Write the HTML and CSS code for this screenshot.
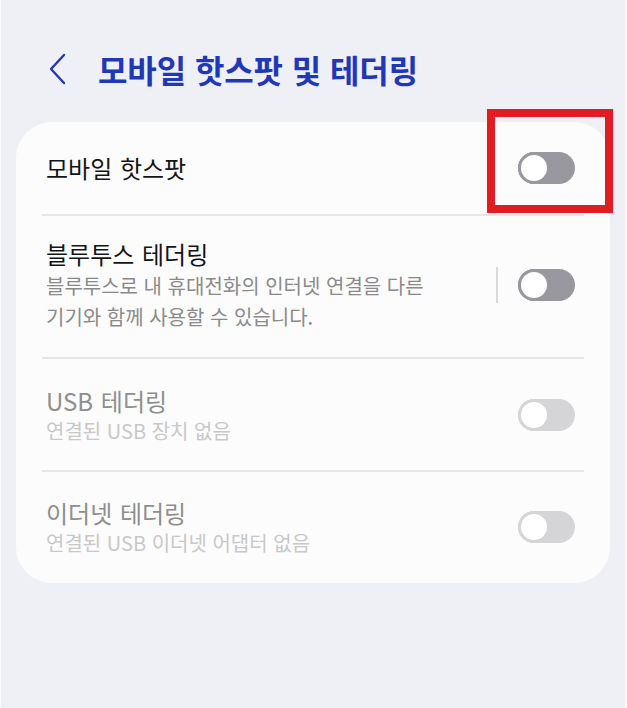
FILE: index.html
```html
<!DOCTYPE html>
<html lang="ko">
<head>
<meta charset="utf-8">
<link rel="stylesheet" href="styles.css">
</head>
<body>
<div class="screen">
  <header class="appbar">
    <svg class="back" width="18" height="32" viewBox="0 0 18 32"><path d="M16 2 L3 16 L16 30" fill="none" stroke="#1f37b9" stroke-width="2.4" stroke-linecap="round" stroke-linejoin="round"/></svg>
    <h1 class="title">모바일 핫스팟 및 테더링</h1>
  </header>
  <section class="card">
    <div class="row row-first">
      <div class="text"><div class="label">모바일 핫스팟</div></div>
      <div class="switch"><span class="thumb"></span></div>
    </div>
    <div class="divider"></div>
    <div class="row row-bt">
      <div class="text">
        <div class="label">블루투스 테더링</div>
        <div class="sub">블루투스로 내 휴대전화의 인터넷 연결을 다른<br>기기와 함께 사용할 수 있습니다.</div>
      </div>
      <div class="sep"></div>
      <div class="switch"><span class="thumb"></span></div>
    </div>
    <div class="divider"></div>
    <div class="row row-dis">
      <div class="text">
        <div class="label">USB 테더링</div>
        <div class="sub">연결된 USB 장치 없음</div>
      </div>
      <div class="switch off"><span class="thumb"></span></div>
    </div>
    <div class="divider"></div>
    <div class="row row-dis row-last">
      <div class="text">
        <div class="label">이더넷 테더링</div>
        <div class="sub">연결된 USB 이더넷 어댑터 없음</div>
      </div>
      <div class="switch off"><span class="thumb"></span></div>
    </div>
  </section>
  <div class="highlight"></div>
</div>
</body>
</html>
```

FILE: styles.css
```css
* { box-sizing: border-box; margin: 0; padding: 0; }
html, body { width: 627px; height: 708px; overflow: hidden; }
body {
  background: #eff0f5;
  font-family: "Noto Sans CJK KR", "Noto Sans", sans-serif;
}
.screen {
  position: relative;
  width: 627px;
  height: 708px;
  border-left: 1px solid #fbfbfd;
  border-right: 2px solid #fbfbfd;
}
.appbar {
  display: flex;
  align-items: center;
  height: 122px;
  padding: 16px 0 0 47px;
}
.back { flex: none; margin-right: 32px; }
.title {
  font-size: 32px;
  font-weight: 700;
  color: #1f37b9;
  letter-spacing: -0.1px;
  line-height: 1;
}
.card {
  margin: 0 15px 0 15px;
  background: #fcfcfd;
  border-radius: 36px;
  padding: 0 35px 0 30px;
}
.row {
  display: flex;
  align-items: center;
}
.text { flex: 1; }
.label {
  font-size: 24px;
  color: #141414;
  line-height: 32px;
  word-spacing: 1px;
}
.sub {
  font-size: 20px;
  color: #8a8a8a;
  line-height: 31px;
}
.row-first { height: 92px; }
.row-bt { height: 141px; padding-bottom: 4px; }
.row-dis { height: 111px; }
.row-dis .label { color: #8e8e8e; }
.row-dis .sub { color: #c8c8c8; line-height: 28px; }
.row-last { padding-bottom: 2px; }
.divider {
  height: 2px;
  background: #e6e6e8;
  margin: 0 -9px 0 -4px;
}
.sep {
  width: 2px;
  height: 36px;
  background: #dadadc;
  margin-right: 20px;
}
.switch {
  flex: none;
  width: 57px;
  height: 32px;
  border-radius: 16px;
  background: #98989e;
  position: relative;
}
.thumb {
  position: absolute;
  left: 0;
  top: 0;
  width: 32px;
  height: 32px;
  border-radius: 50%;
  background: #fff;
  border: 3.5px solid #98989e;
}
.switch.off { background: #d5d5d7; }
.switch.off .thumb { border-color: #d5d5d7; }
.highlight {
  position: absolute;
  left: 486px;
  top: 109px;
  width: 126px;
  height: 104px;
  border: 8px solid #e31c21;
}
```
